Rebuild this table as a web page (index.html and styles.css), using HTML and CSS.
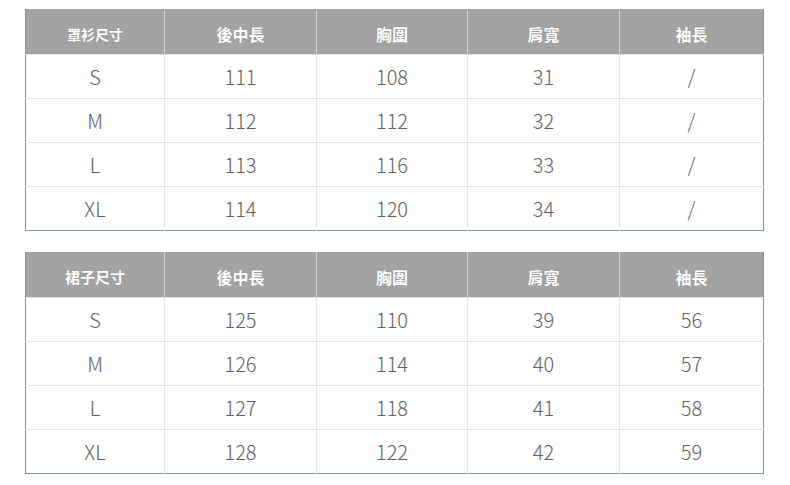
FILE: index.html
```html
<!DOCTYPE html>
<html lang="zh-Hant">
<head>
<meta charset="utf-8">
<link rel="stylesheet" href="styles.css">
</head>
<body>
<div class="page">
  <table class="size t1">
    <colgroup><col class="c1"><col class="c2"><col class="c3"><col class="c4"><col class="c5"></colgroup>
    <thead>
      <tr><th class="first">罩衫尺寸</th><th>後中長</th><th>胸圍</th><th>肩寬</th><th>袖長</th></tr>
    </thead>
    <tbody>
      <tr><td>S</td><td>111</td><td>108</td><td>31</td><td>/</td></tr>
      <tr><td>M</td><td>112</td><td>112</td><td>32</td><td>/</td></tr>
      <tr><td>L</td><td>113</td><td>116</td><td>33</td><td>/</td></tr>
      <tr><td>XL</td><td>114</td><td>120</td><td>34</td><td>/</td></tr>
    </tbody>
  </table>
  <table class="size t2">
    <colgroup><col class="c1"><col class="c2"><col class="c3"><col class="c4"><col class="c5"></colgroup>
    <thead>
      <tr><th class="first">裙子尺寸</th><th>後中長</th><th>胸圍</th><th>肩寬</th><th>袖長</th></tr>
    </thead>
    <tbody>
      <tr><td>S</td><td>125</td><td>110</td><td>39</td><td>56</td></tr>
      <tr><td>M</td><td>126</td><td>114</td><td>40</td><td>57</td></tr>
      <tr><td>L</td><td>127</td><td>118</td><td>41</td><td>58</td></tr>
      <tr><td>XL</td><td>128</td><td>122</td><td>42</td><td>59</td></tr>
    </tbody>
  </table>
</div>
</body>
</html>
```
FILE: styles.css
```css
html, body {
  margin: 0;
  padding: 0;
  background: #ffffff;
}
.page {
  padding: 9px 0 0 25px;
  display: flex;
  flex-direction: column;
  gap: 21px;
}
.size {
  width: 738px;
  border-collapse: collapse;
  table-layout: fixed;
  font-family: "Noto Sans CJK TC", "Noto Sans", sans-serif;
  border-left: 1px solid #6f9c9a;
  border-right: 1px solid #6f9c9a;
  border-bottom: 1px solid #6f9c9a;
}
.c1 { width: 139px; }
.c2 { width: 152px; }
.c3 { width: 151px; }
.c4 { width: 152px; }
.c5 { width: 144px; }
.size th {
  height: 41px;
  padding: 4px 0 0 0;
  background: #a3a3a3;
  color: #ffffff;
  font-size: 16px;
  font-weight: 700;
  text-shadow: 0 0 1px rgba(0,0,0,0.25);
  border-left: 1px solid #d4d4d4;
  vertical-align: middle;
  text-align: center;
}
.size th.first {
  font-size: 14px;
  border-left: none;
}
.size td {
  height: 43px;
  padding: 0;
  color: #5e5e5e;
  font-size: 20px;
  font-weight: 300;
  text-align: center;
  vertical-align: middle;
  border-left: 1px solid #e4e4e4;
  border-top: 1px solid #e4e4e4;
}
.size td:first-child {
  border-left: none;
}
.t2 th.first { font-size: 15px; }
```
